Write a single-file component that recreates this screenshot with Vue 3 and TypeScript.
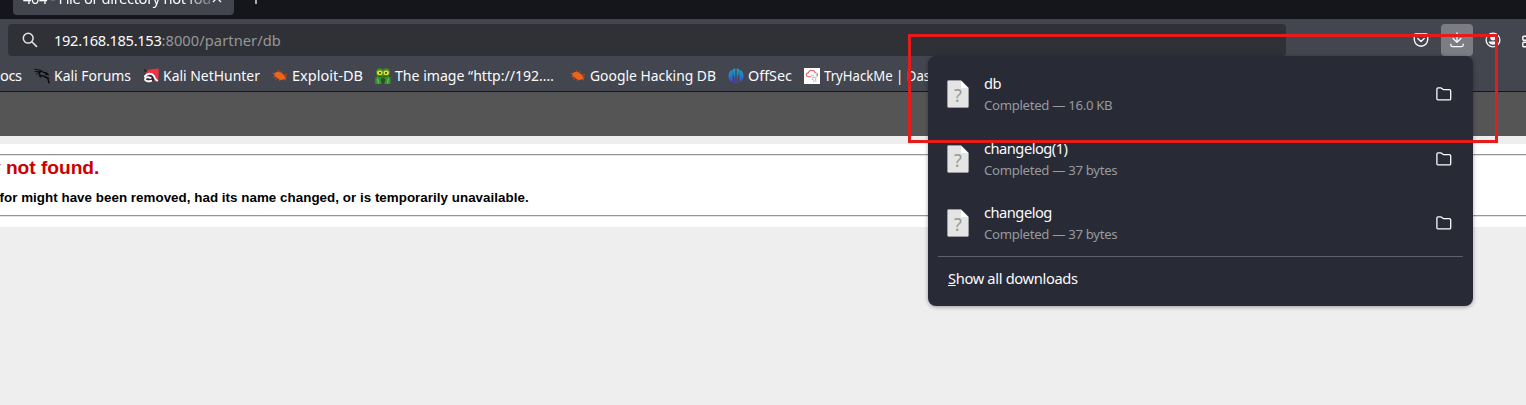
<script setup lang="ts">
interface Bookmark {
  icon: string
  label: string
  width: number
  slot: number
}

interface Download {
  name: string
  status: string
}

const bookmarks: Bookmark[] = [
  { icon: 'dragon', label: 'Kali Forums', width: 77, slot: 77 },
  { icon: 'nethunter', label: 'Kali NetHunter', width: 97, slot: 97 },
  { icon: 'bug', label: 'Exploit-DB', width: 71, slot: 71 },
  { icon: 'frog', label: 'The image “http://192.…', width: 159, slot: 162.5 },
  { icon: 'bug', label: 'Google Hacking DB', width: 126, slot: 126 },
  { icon: 'offsec', label: 'OffSec', width: 44, slot: 44 },
  { icon: 'thm', label: 'TryHackMe | Dashboard', width: 151, slot: 151 },
]

const downloads: Download[] = [
  { name: 'db', status: 'Completed — 16.0 KB' },
  { name: 'changelog(1)', status: 'Completed — 37 bytes' },
  { name: 'changelog', status: 'Completed — 37 bytes' },
]
</script>

<template>
  <div class="window">
    <div class="tabs">
      <div class="tab">
        <span class="tab-title">404 - File or directory not found.</span>
        <svg class="tab-close" width="10" height="10" viewBox="0 0 10 10"><path d="M1 1l8 8M9 1L1 9" stroke="#fbfbfe" stroke-width="1.3" /></svg>
      </div>
      <svg class="plus" width="12" height="14" viewBox="0 0 12 14"><path d="M6 1v12M0 7h12" stroke="#fbfbfe" stroke-width="1.3" /></svg>
    </div>

    <div class="nav">
      <div class="urlbar">
        <svg class="search" width="16" height="16" viewBox="0 0 16 16" fill="none" stroke="#e4e4e7" stroke-width="1.5" stroke-linecap="round">
          <circle cx="6.2" cy="6.2" r="4.9" /><path d="M9.8 9.8l4.7 4.6" />
        </svg>
        <span class="url"><b>192.168.185.153</b>:8000/partner/db</span>
      </div>
      <div class="tools">
        <svg class="pocket" width="16" height="16" viewBox="0 0 16 16" fill="none" stroke="#fbfbfe" stroke-width="1.4" stroke-linecap="round" stroke-linejoin="round">
          <path d="M2.7 1.9h10.6q1.4 0 1.4 1.4v4.3a6.7 6.6 0 0 1-13.4 0V3.3q0-1.4 1.4-1.4z" /><path d="M4.8 6.4L8 9.4l3.2-3" />
        </svg>
        <div class="dl-button">
          <svg width="16" height="16" viewBox="0 0 16 16" fill="none" stroke="#fbfbfe" stroke-width="1.3" stroke-linecap="round" stroke-linejoin="round">
            <path d="M8 .8v9.5M4.1 6.5L8 10.4l3.9-3.9" /><path d="M1.8 12.2v.9q0 1.5 1.5 1.5h9.4q1.5 0 1.5-1.5v-.9" />
          </svg>
        </div>
        <svg class="account" width="16" height="16" viewBox="0 0 16 16">
          <circle cx="8" cy="8" r="6.9" fill="none" stroke="#fbfbfe" stroke-width="1.3" />
          <circle cx="8" cy="5.8" r="2.7" fill="#fbfbfe" /><path d="M3.9 9.5h8.2v1.2q-1.3 2-4.1 2t-4.1-2z" fill="#fbfbfe" />
        </svg>
        <svg class="ext" width="16" height="16" viewBox="0 0 16 16" fill="none" stroke="#fbfbfe" stroke-width="1.4">
          <rect x=".8" y="4.2" width="5" height="4" rx="1" /><rect x=".8" y="10.2" width="5" height="4.5" rx="1" />
        </svg>
      </div>
    </div>

    <div class="bookmarks">
      <span class="cut">ocs</span>
      <div v-for="(b, i) in bookmarks" :key="i" class="bookmark">
        <svg v-if="b.icon === 'dragon'" width="16" height="16" viewBox="0 0 16 16" fill="none" stroke="#08090b" stroke-linecap="round" stroke-linejoin="round">
          <path d="M.6 1.2L6 2.1l4 2.2M1 3.6l4.5-.3M2.2 6.1L5.4 4" stroke-width=".9" />
          <path d="M7.2 3.2C4.5 4.6 4.6 7 7.4 7.6c3.4.4 5.6 1.3 6.6 3.5l1 4" stroke-width="1.3" />
          <path d="M9 4.5l3 .2 2.4 2-2.8-.6M11 9l3.8 1.2M5.2 7.8L7 9" stroke-width="1.2" />
        </svg>
        <svg v-else-if="b.icon === 'nethunter'" width="16" height="16" viewBox="0 0 16 16">
          <path d="M5.2 1.8L15.8.4l-.5 12-2.8 1L3 5z" fill="#f4323f" />
          <path d="M.7.8l3.2 2-1.6 1.4z" fill="#171b20" />
          <ellipse cx="6.4" cy="9.4" rx="5.6" ry="4.4" fill="#252a30" />
          <path d="M7.6 9.8C5 8.6 2 9.5 2 11.2c0 2 3.4 2.6 6.3 1.6M1.8 8.4c2.6-3.4 7.2-3.6 9-.6.9 1.7 1.2 3.8 3.4 4.8" fill="none" stroke="#fff" stroke-width="1.9" stroke-linecap="round" />
        </svg>
        <svg v-else-if="b.icon === 'bug'" width="16" height="16" viewBox="0 0 16 16">
          <path d="M2.2 5.3Q5.5 2.6 8.8 4.4q3.2 1.6 4.2 4.7l1 2.2-2.8.3Q8 13 5 9.8L2.6 8.6z" fill="#ee6519" />
          <path d="M.4 5.2l3.1 1.1M1.2 9.4l3.3-1.2M3.4 12l2.2-2.7M7.6 13.1l.3-2.3M6 2l1.2 2.6M10 3.2l-.3 2.3M12 7.2l3-.8M12.3 8.6l2.4.4M12 10.4l2 2.2" fill="none" stroke="#c95620" stroke-width=".8" />
        </svg>
        <svg v-else-if="b.icon === 'frog'" width="16" height="16" viewBox="0 0 16 16">
          <path d="M1 3.5Q2 0 5.4.3L8 1.4 10.6.3Q14 0 15 3.5q.4 3.5-1.6 4.7l2.2 1.4V16H.2V9.8l2.4-1.6Q.6 7 1 3.5z" fill="#398f2b" />
          <ellipse cx="4.8" cy="4.8" rx="2.7" ry="2.3" fill="#f3e216" /><ellipse cx="11.2" cy="4.8" rx="2.7" ry="2.3" fill="#f3e216" />
          <path d="M5 3.9v1.9M11 3.9v1.9" stroke="#1e2d15" stroke-width="1.6" />
          <path d="M3.4 8.2Q8 10.2 12.6 8.2" fill="none" stroke="#1d5420" stroke-width=".9" />
          <path d="M2.6 10.5l1 5M13.4 10.5l-1 5" stroke="#65c46a" stroke-width="1.2" /><path d="M5.6 11l1.2 5h2.4l1.2-5L8 10z" fill="#285030" />
        </svg>
        <svg v-else-if="b.icon === 'offsec'" width="16" height="16" viewBox="0 0 16 16">
          <defs><linearGradient id="og" gradientUnits="userSpaceOnUse" x1="0" y1="0" x2="0" y2="16"><stop offset="0" stop-color="#10b5c9" /><stop offset=".55" stop-color="#2870c9" /><stop offset="1" stop-color="#6630d6" /></linearGradient></defs>
          <path d="M4.6 1.4v13Q.4 12.2.4 8t4.2-6.6zM5.2 1.1L7.3.5v15l-1-.3V8.6L5.2 7zM10.8 1.1L8.7.5v15l1-.3V8.6L10.8 7zM11.4 1.4v13q4.2-2.2 4.2-6.4t-4.2-6.6z" fill="url(#og)" />
        </svg>
        <svg v-else width="16" height="16" viewBox="0 0 16 16">
          <path d="M0 0h16v16H0z" fill="#fff" />
          <path d="M7.2 8.7H4.4Q2.3 8.5 2.3 6.7q.2-1.8 2-1.8.9-2.8 3.5-2.7 2.7 0 3.3 2.5 2.2.1 2.4 1.8.1 1.2-1 1.8" fill="none" stroke="#dc6060" stroke-width="1.1" />
          <path d="M7.3 7.3h2.2M8.6 9.4h3.7M7.8 11.2h2M11 11.2h1.7M9 13h3.8" stroke="#a2a5ab" stroke-width="1.2" stroke-dasharray="1.2 .5" />
        </svg>
        <svg class="label" :width="b.slot" height="22"><text x="0" y="16" :textLength="b.width" lengthAdjust="spacingAndGlyphs">{{ b.label }}</text></svg>
      </div>
    </div>

    <div class="page">
      <div class="page-header"></div>
      <div class="content">
        <div class="fieldset">
          <h2>y not found.</h2>
          <h3>for might have been removed, had its name changed, or is temporarily unavailable.</h3>
        </div>
      </div>
    </div>

    <div class="panel">
      <div v-for="d in downloads" :key="d.name" class="download">
        <svg class="file" width="22" height="28" viewBox="0 0 22 28">
          <path d="M.5 1.5Q.5.5 1.5.5H14l7.5 7.5v18.5q0 1-1 1h-19q-1 0-1-1z" fill="#e4e4e4" stroke="#aaaaad" stroke-width=".6" />
          <path d="M14 .8L21.2 8H14z" fill="#fff" />
          <text x="11" y="22" text-anchor="middle" class="question">?</text>
        </svg>
        <div class="info">
          <div class="name">{{ d.name }}</div>
          <div class="status">{{ d.status }}</div>
        </div>
        <svg class="folder" width="16" height="16" viewBox="0 0 16 16" fill="none" stroke="#fbfbfe" stroke-width="1.3" stroke-linejoin="round">
          <path d="M.9 3q0-1.1 1.1-1.1h3.1l2.2 1.7h6q1.4 0 1.4 1.3v7.8q0 1.2-1.2 1.2H2.1Q.9 13.9.9 12.7z" />
        </svg>
      </div>
      <div class="footer"><u>S</u>how all downloads</div>
    </div>
    <div class="highlight"></div>
  </div>
</template>

<style>
body { margin: 0; overflow: hidden; }
</style>

<style scoped>
.window { position: relative; width: 1526px; height: 405px; overflow: hidden; background: #eee; font-family: "Noto Sans", sans-serif; font-size: 14.67px; color: #fbfbfe; }
.tabs { height: 19px; display: flex; background: #15161b; overflow: hidden; }
.tab { box-sizing: border-box; width: 221px; height: 15px; margin-left: 13px; padding-left: 10px; background: #42454d; border-radius: 0 0 4px 4px; display: flex; overflow: hidden; }
.tab-title { width: 189px; flex: none; margin-top: -12px; line-height: 20px; white-space: nowrap; overflow: hidden; font-size: 14.67px; letter-spacing: -.35px; -webkit-mask-image: linear-gradient(90deg, #000 160px, transparent 198px); mask-image: linear-gradient(90deg, #000 160px, transparent 198px); }
.tab-close { flex: none; margin-top: -7px; }
.plus { margin: -9px 0 0 16px; }
.nav { height: 41px; box-sizing: border-box; padding: 5px 0 4px 8px; display: flex; background: #43464e; }
.urlbar { flex: none; width: 1278px; height: 32px; border-radius: 4px; background: #303136; display: flex; align-items: center; }
.search { margin-left: 14px; }
.url { margin-left: 16px; color: #96979a; white-space: nowrap; letter-spacing: .07px; }
.url b { color: #fbfbfe; font-weight: 400; letter-spacing: -.33px; }
.tools { display: flex; align-items: center; flex: none; }
.pocket { margin-left: 127px; }
.dl-button { width: 32px; height: 32px; margin-left: 12px; border-radius: 4px; background: #7c7d82; display: flex; align-items: center; justify-content: center; }
.account { margin-left: 12px; }
.ext { margin-left: 21px; }
.bookmarks { height: 32px; box-sizing: border-box; border-bottom: 1px solid #15161b; background: #43464e; display: flex; align-items: center; gap: 12px; overflow: hidden; }
.cut { width: 22px; flex: none; line-height: 20px; margin-top: -1px; letter-spacing: -.4px; }
.bookmark { display: flex; align-items: center; gap: 4px; flex: none; }
.label { overflow: visible; fill: #fbfbfe; }
.page { font-family: "Liberation Sans", Arial, sans-serif; color: #000; }
.page-header { height: 44px; background: #555; }
.content { margin-top: 8px; height: 83px; background: #fff; padding-top: 10px; box-sizing: border-box; }
.fieldset { height: 62px; box-sizing: border-box; border-top: 1px solid #95959c; border-bottom: 1px solid #95959c; box-shadow: 0 1px #e4e4e8, inset 0 1px #e4e4e8; overflow: hidden; }
h2 { margin: 1px 0 0 -10px; font-size: 19.2px; line-height: 24px; letter-spacing: -.04px; color: #c00; white-space: nowrap; }
h3 { margin: 9px 0 0 -.5px; font-size: 13.33px; line-height: 18px; letter-spacing: .05px; white-space: nowrap; }
.panel { position: absolute; left: 928px; top: 56px; width: 545px; height: 250px; box-sizing: border-box; padding: 6px 10px 0; border-radius: 8px; background: #282a35; box-shadow: 0 1px 4px rgba(0,0,0,.35); }
.download { height: 64.5px; padding: 0 11px 0 9px; display: flex; align-items: center; }
.file { flex: none; }
.question { font: 18px "Noto Sans", sans-serif; fill: #99999c; }
.info { margin-left: 15px; flex: 1; padding-top: 1px; }
.name { font-size: 14.67px; line-height: 21px; letter-spacing: -.5px; }
.status { font-size: 13.2px; line-height: 22px; letter-spacing: -.31px; color: #98999f; }
.footer { height: 45px; padding-left: 10px; border-top: 1px solid #5f606b; line-height: 43px; letter-spacing: -.33px; }
.highlight { position: absolute; left: 908px; top: 34px; width: 590px; height: 109px; box-sizing: border-box; border: 3px solid #e51c1c; }
</style>
